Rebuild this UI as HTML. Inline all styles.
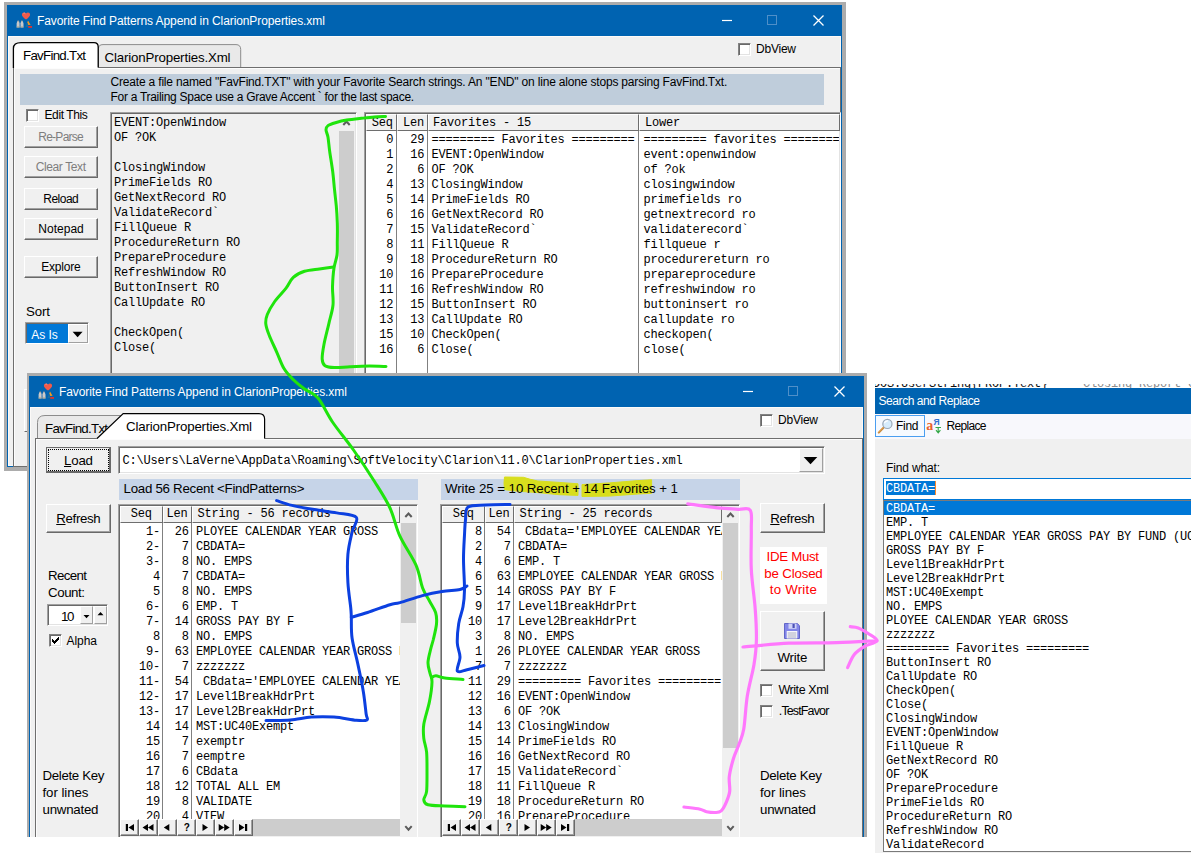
<!DOCTYPE html>
<html lang="en"><head><meta charset="utf-8"><title>Favorite Find Patterns</title>
<style>
html,body{margin:0;padding:0;background:#fff;}
body{width:1191px;height:858px;position:relative;overflow:hidden;font-family:"Liberation Sans", sans-serif;}
div,span,svg{position:absolute;box-sizing:border-box;}
.s{font-family:"Liberation Sans", sans-serif;white-space:pre;color:#000;}
.m{font-family:"Liberation Mono", monospace;white-space:pre;color:#000;line-height:16px;}
.clip{overflow:hidden;}
.btn{background:#f0f0f0;border:1px solid;border-color:#fff #696969 #696969 #fff;box-shadow:inset -1px -1px 0 #a0a0a0, inset 1px 1px 0 #f0f0f0;}
.sunk{border:1px solid;border-color:#a0a0a0 #fff #fff #a0a0a0;box-shadow:inset 1px 1px 0 #696969, inset -1px -1px 0 #e3e3e3;}
.hdr{background:#f0f0f0;border:1px solid;border-color:#fff #6e6e6e #6e6e6e #fff;}
.chk{background:#fff;border:1px solid;border-color:#828282 #fff #fff #828282;box-shadow:inset 1px 1px 0 #696969, inset -1px -1px 0 #e3e3e3;}
</style></head>
<body>
<div style="left:4px;top:2px;width:842px;height:469px;background:#acacac;"></div>
<div style="left:7px;top:5px;width:835px;height:462px;background:#0063b1;"></div>
<div style="left:8px;top:36px;width:833px;height:430px;background:#f0f0f0;border:1px solid #fcfaf8;"></div>
<svg style="left:16px;top:12px" width="17" height="17" viewBox="0 0 17 17"><path d="M10 7.600C7.200 5.500 5.900 4 5.900 2.500 5.900 0.300 8.800-.300 10 1.600 11.200-.300 14.100 0.300 14.100 2.500 14.100 4 12.800 5.500 10 7.600z" fill="#f25a4a"/><path d="M7.500 1.300q1-.600 1.800 0.300" stroke="#f9a39a" stroke-width="0.800" fill="none"/><path d="M0.600 15.600V11.500l.8-2.500h1.600l.6 2.500v4.100zM4.500 15.600V11.500l.6-2.500h1.600l.8 2.500v4.100z" fill="#c9c9c9"/><path d="M1.400 8.400h1.600v1H1.400zM5.100 8.400h1.600v1H5.100z" fill="#8f8f8f"/><path d="M3.300 11h1.500v1.600H3.300z" fill="#7f9fc0"/><path d="M0.600 14.600h3v1h-3zM4.500 14.600h3v1h-3z" fill="#a9a088"/><path d="M12 8.600l2.600 4.200-2.400.300-.9-2.600z" fill="#f59a1b"/><path d="M11.200 10.500l.9 4.500H9.500z" fill="#1f6f9f"/><path d="M12.200 14h3.800v1.800h-3.800z" fill="#e0322c"/></svg>
<span class="s" style="left:37.00px;top:13.00px;font-size:12px;line-height:16px;letter-spacing:-0.094px;color:#fff;">Favorite Find Patterns Append in ClarionProperties.xml</span>
<svg style="left:706px;top:6px" width="136" height="30" viewBox="0 0 136 30"><path d="M16 14.500h10" stroke="#fff" stroke-width="1.200" fill="none"/><rect x="61.500" y="9.500" width="9" height="9" stroke="#4f8fc8" stroke-width="1" fill="none"/><path d="M107.500 9.500l10 10M117.500 9.500l-10 10" stroke="#fff" stroke-width="1.300" fill="none"/></svg>
<div class="chk" style="left:738px;top:43px;width:13px;height:13px;"></div>
<span class="s" style="left:756.00px;top:41.00px;font-size:12px;line-height:16px;letter-spacing:-0.227px;">DbView</span>
<div style="left:13px;top:67px;width:828px;height:400px;border:1px solid #6e6e6e;background:#f0f0f0;box-shadow:inset 1px 1px 0 #fcfcfc;"></div>
<svg style="left:10px;top:40px" width="240" height="30" viewBox="0 0 240 30"><path d="M88.500 27V8.500Q88.500 4.600 93 4.600H226Q230.700 4.600 230.700 9.500V27z" fill="#e9e9e9"/><path d="M88.500 27V8.500Q88.500 4.600 93 4.600H226Q230.700 4.600 230.700 9.500V27" fill="none" stroke="#8c8c8c" stroke-width="1"/><path d="M3.400 28V8.500Q3.400 2.600 11 2.600H84Q88.200 2.600 88.200 7V28z" fill="#fff"/><path d="M3.400 28V8.500Q3.400 2.600 11 2.600H84Q88.200 2.600 88.200 7V27.500" fill="none" stroke="#000" stroke-width="1.300"/></svg>
<span class="s" style="left:23.00px;top:47.50px;font-size:13.3px;line-height:16px;letter-spacing:-0.719px;">FavFind.Txt</span>
<span class="s" style="left:104.50px;top:49.50px;font-size:13.3px;line-height:16px;letter-spacing:-0.166px;">ClarionProperties.Xml</span>
<div style="left:20px;top:74px;width:804px;height:31px;background:#bfcddb;"></div>
<span class="s" style="left:110.50px;top:74.00px;font-size:12px;line-height:16px;letter-spacing:-0.181px;">Create a file named "FavFind.TXT" with your Favorite Search strings. An "END" on line alone stops parsing FavFind.Txt.</span>
<span class="s" style="left:110.50px;top:89.00px;font-size:12px;line-height:16px;letter-spacing:-0.287px;">For a Trailing Space use a Grave Accent ` for the last space.</span>
<div class="chk" style="left:26px;top:109px;width:13px;height:13px;"></div>
<span class="s" style="left:44.50px;top:106.80px;font-size:12px;line-height:16px;letter-spacing:-0.398px;">Edit This</span>
<div class="btn" style="left:24px;top:126px;width:74px;height:22px;"></div>
<span class="s" style="left:38.25px;top:128.70px;font-size:12px;line-height:16px;letter-spacing:-0.741px;color:#7e7e7e;">Re-Parse</span>
<div class="btn" style="left:24px;top:156px;width:74px;height:22px;"></div>
<span class="s" style="left:35.75px;top:158.70px;font-size:12px;line-height:16px;letter-spacing:-0.391px;color:#7e7e7e;">Clear Text</span>
<div class="btn" style="left:24px;top:188px;width:74px;height:22px;"></div>
<span class="s" style="left:43.25px;top:190.70px;font-size:12px;line-height:16px;letter-spacing:-0.505px;color:#000;">Reload</span>
<div class="btn" style="left:24px;top:218px;width:74px;height:22px;"></div>
<span class="s" style="left:38.25px;top:220.70px;font-size:12px;line-height:16px;letter-spacing:0.022px;color:#000;">Notepad</span>
<div class="btn" style="left:24px;top:256px;width:74px;height:22px;"></div>
<span class="s" style="left:41.25px;top:258.70px;font-size:12px;line-height:16px;letter-spacing:-0.198px;color:#000;">Explore</span>
<span class="s" style="left:26.00px;top:303.70px;font-size:13.3px;line-height:16px;letter-spacing:-0.129px;">Sort</span>
<div class="sunk" style="left:25px;top:322px;width:64px;height:22px;background:#fff;"></div>
<div style="left:27px;top:324px;width:41px;height:19px;background:#0078d7;"></div>
<span class="s" style="left:31.30px;top:326.70px;font-size:12px;line-height:16px;letter-spacing:-0.043px;color:#fff;">As Is</span>
<div style="left:68px;top:324px;width:20px;height:19px;background:#f0f0f0;border:1px solid;border-color:#fff #a0a0a0 #a0a0a0 #fff;"></div>
<svg style="left:68px;top:324px" width="20" height="19" viewBox="0 0 20 19"><path d="M4.600 7.800h10l-5 5.400z" fill="#000"/></svg>
<div style="left:24px;top:389px;width:3px;height:43px;background:#f0f0f0;border-left:1px solid #fff;border-top:1px solid #fff;border-bottom:1px solid #696969;"></div>
<div class="sunk" style="left:110px;top:112px;width:247px;height:360px;background:#f0f0f0;"></div>
<span class="m" style="left:114px;top:115.0px;font-size:12px;letter-spacing:-0.200px;">EVENT:OpenWindow</span>
<span class="m" style="left:114px;top:130.0px;font-size:12px;letter-spacing:-0.200px;">OF ?OK</span>
<span class="m" style="left:114px;top:160.0px;font-size:12px;letter-spacing:-0.200px;">ClosingWindow</span>
<span class="m" style="left:114px;top:175.0px;font-size:12px;letter-spacing:-0.200px;">PrimeFields RO</span>
<span class="m" style="left:114px;top:190.0px;font-size:12px;letter-spacing:-0.200px;">GetNextRecord RO</span>
<span class="m" style="left:114px;top:205.0px;font-size:12px;letter-spacing:-0.200px;">ValidateRecord`</span>
<span class="m" style="left:114px;top:220.0px;font-size:12px;letter-spacing:-0.200px;">FillQueue R</span>
<span class="m" style="left:114px;top:235.0px;font-size:12px;letter-spacing:-0.200px;">ProcedureReturn RO</span>
<span class="m" style="left:114px;top:250.0px;font-size:12px;letter-spacing:-0.200px;">PrepareProcedure</span>
<span class="m" style="left:114px;top:265.0px;font-size:12px;letter-spacing:-0.200px;">RefreshWindow RO</span>
<span class="m" style="left:114px;top:280.0px;font-size:12px;letter-spacing:-0.200px;">ButtonInsert RO</span>
<span class="m" style="left:114px;top:295.0px;font-size:12px;letter-spacing:-0.200px;">CallUpdate RO</span>
<span class="m" style="left:114px;top:325.0px;font-size:12px;letter-spacing:-0.200px;">CheckOpen(</span>
<span class="m" style="left:114px;top:340.0px;font-size:12px;letter-spacing:-0.200px;">Close(</span>
<div style="left:338px;top:114px;width:17px;height:360px;background:#f0f0f0;"></div>
<div style="left:339px;top:131px;width:15px;height:349px;background:#cdcdcd;"></div>
<svg style="left:338px;top:114px" width="17" height="17" viewBox="0 0 17 17"><path d="M5.300 11l3.200-3.500 3.200 3.500" stroke="#5c5c5c" stroke-width="2" fill="none"/></svg>
<div class="sunk" style="left:364px;top:112px;width:477px;height:360px;background:#fff;"></div>
<div class="hdr" style="left:366px;top:114px;width:31px;height:17px;"></div>
<div class="hdr" style="left:397px;top:114px;width:31px;height:17px;"></div>
<div class="hdr" style="left:428px;top:114px;width:211px;height:17px;"></div>
<div class="hdr" style="left:639px;top:114px;width:201px;height:17px;"></div>
<span class="m" style="left:371.7px;top:114.5px;font-size:12px;letter-spacing:-0.200px;">Seq</span>
<span class="m" style="left:403px;top:114.5px;font-size:12px;letter-spacing:-0.200px;">Len</span>
<span class="m" style="left:433px;top:114.5px;font-size:12px;letter-spacing:-0.200px;">Favorites - 15</span>
<span class="m" style="left:645px;top:114.5px;font-size:12px;letter-spacing:-0.200px;">Lower</span>
<div style="left:396px;top:131px;width:1px;height:340px;background:#808080;"></div>
<div style="left:427px;top:131px;width:1px;height:340px;background:#808080;"></div>
<div style="left:638px;top:131px;width:1px;height:340px;background:#808080;"></div>
<div class="clip" style="left:639px;top:131px;width:200px;height:340px;">
<span class="m" style="left:4.5px;top:1.00px;font-size:12px;letter-spacing:-0.200px;">========= favorites =========</span>
<span class="m" style="left:4.5px;top:16.00px;font-size:12px;letter-spacing:-0.200px;">event:openwindow</span>
<span class="m" style="left:4.5px;top:31.00px;font-size:12px;letter-spacing:-0.200px;">of ?ok</span>
<span class="m" style="left:4.5px;top:46.00px;font-size:12px;letter-spacing:-0.200px;">closingwindow</span>
<span class="m" style="left:4.5px;top:61.00px;font-size:12px;letter-spacing:-0.200px;">primefields ro</span>
<span class="m" style="left:4.5px;top:76.00px;font-size:12px;letter-spacing:-0.200px;">getnextrecord ro</span>
<span class="m" style="left:4.5px;top:91.00px;font-size:12px;letter-spacing:-0.200px;">validaterecord`</span>
<span class="m" style="left:4.5px;top:106.00px;font-size:12px;letter-spacing:-0.200px;">fillqueue r</span>
<span class="m" style="left:4.5px;top:121.00px;font-size:12px;letter-spacing:-0.200px;">procedurereturn ro</span>
<span class="m" style="left:4.5px;top:136.00px;font-size:12px;letter-spacing:-0.200px;">prepareprocedure</span>
<span class="m" style="left:4.5px;top:151.00px;font-size:12px;letter-spacing:-0.200px;">refreshwindow ro</span>
<span class="m" style="left:4.5px;top:166.00px;font-size:12px;letter-spacing:-0.200px;">buttoninsert ro</span>
<span class="m" style="left:4.5px;top:181.00px;font-size:12px;letter-spacing:-0.200px;">callupdate ro</span>
<span class="m" style="left:4.5px;top:196.00px;font-size:12px;letter-spacing:-0.200px;">checkopen(</span>
<span class="m" style="left:4.5px;top:211.00px;font-size:12px;letter-spacing:-0.200px;">close(</span>
</div>
<span class="m" style="right:797.80px;top:132.0px;font-size:12px;letter-spacing:-0.200px;">0</span>
<span class="m" style="right:766.80px;top:132.0px;font-size:12px;letter-spacing:-0.200px;">29</span>
<span class="m" style="left:431.5px;top:132.0px;font-size:12px;letter-spacing:-0.200px;">========= Favorites =========</span>
<span class="m" style="right:797.80px;top:147.0px;font-size:12px;letter-spacing:-0.200px;">1</span>
<span class="m" style="right:766.80px;top:147.0px;font-size:12px;letter-spacing:-0.200px;">16</span>
<span class="m" style="left:431.5px;top:147.0px;font-size:12px;letter-spacing:-0.200px;">EVENT:OpenWindow</span>
<span class="m" style="right:797.80px;top:162.0px;font-size:12px;letter-spacing:-0.200px;">2</span>
<span class="m" style="right:766.80px;top:162.0px;font-size:12px;letter-spacing:-0.200px;">6</span>
<span class="m" style="left:431.5px;top:162.0px;font-size:12px;letter-spacing:-0.200px;">OF ?OK</span>
<span class="m" style="right:797.80px;top:177.0px;font-size:12px;letter-spacing:-0.200px;">4</span>
<span class="m" style="right:766.80px;top:177.0px;font-size:12px;letter-spacing:-0.200px;">13</span>
<span class="m" style="left:431.5px;top:177.0px;font-size:12px;letter-spacing:-0.200px;">ClosingWindow</span>
<span class="m" style="right:797.80px;top:192.0px;font-size:12px;letter-spacing:-0.200px;">5</span>
<span class="m" style="right:766.80px;top:192.0px;font-size:12px;letter-spacing:-0.200px;">14</span>
<span class="m" style="left:431.5px;top:192.0px;font-size:12px;letter-spacing:-0.200px;">PrimeFields RO</span>
<span class="m" style="right:797.80px;top:207.0px;font-size:12px;letter-spacing:-0.200px;">6</span>
<span class="m" style="right:766.80px;top:207.0px;font-size:12px;letter-spacing:-0.200px;">16</span>
<span class="m" style="left:431.5px;top:207.0px;font-size:12px;letter-spacing:-0.200px;">GetNextRecord RO</span>
<span class="m" style="right:797.80px;top:222.0px;font-size:12px;letter-spacing:-0.200px;">7</span>
<span class="m" style="right:766.80px;top:222.0px;font-size:12px;letter-spacing:-0.200px;">15</span>
<span class="m" style="left:431.5px;top:222.0px;font-size:12px;letter-spacing:-0.200px;">ValidateRecord`</span>
<span class="m" style="right:797.80px;top:237.0px;font-size:12px;letter-spacing:-0.200px;">8</span>
<span class="m" style="right:766.80px;top:237.0px;font-size:12px;letter-spacing:-0.200px;">11</span>
<span class="m" style="left:431.5px;top:237.0px;font-size:12px;letter-spacing:-0.200px;">FillQueue R</span>
<span class="m" style="right:797.80px;top:252.0px;font-size:12px;letter-spacing:-0.200px;">9</span>
<span class="m" style="right:766.80px;top:252.0px;font-size:12px;letter-spacing:-0.200px;">18</span>
<span class="m" style="left:431.5px;top:252.0px;font-size:12px;letter-spacing:-0.200px;">ProcedureReturn RO</span>
<span class="m" style="right:797.80px;top:267.0px;font-size:12px;letter-spacing:-0.200px;">10</span>
<span class="m" style="right:766.80px;top:267.0px;font-size:12px;letter-spacing:-0.200px;">16</span>
<span class="m" style="left:431.5px;top:267.0px;font-size:12px;letter-spacing:-0.200px;">PrepareProcedure</span>
<span class="m" style="right:797.80px;top:282.0px;font-size:12px;letter-spacing:-0.200px;">11</span>
<span class="m" style="right:766.80px;top:282.0px;font-size:12px;letter-spacing:-0.200px;">16</span>
<span class="m" style="left:431.5px;top:282.0px;font-size:12px;letter-spacing:-0.200px;">RefreshWindow RO</span>
<span class="m" style="right:797.80px;top:297.0px;font-size:12px;letter-spacing:-0.200px;">12</span>
<span class="m" style="right:766.80px;top:297.0px;font-size:12px;letter-spacing:-0.200px;">15</span>
<span class="m" style="left:431.5px;top:297.0px;font-size:12px;letter-spacing:-0.200px;">ButtonInsert RO</span>
<span class="m" style="right:797.80px;top:312.0px;font-size:12px;letter-spacing:-0.200px;">13</span>
<span class="m" style="right:766.80px;top:312.0px;font-size:12px;letter-spacing:-0.200px;">13</span>
<span class="m" style="left:431.5px;top:312.0px;font-size:12px;letter-spacing:-0.200px;">CallUpdate RO</span>
<span class="m" style="right:797.80px;top:327.0px;font-size:12px;letter-spacing:-0.200px;">15</span>
<span class="m" style="right:766.80px;top:327.0px;font-size:12px;letter-spacing:-0.200px;">10</span>
<span class="m" style="left:431.5px;top:327.0px;font-size:12px;letter-spacing:-0.200px;">CheckOpen(</span>
<span class="m" style="right:797.80px;top:342.0px;font-size:12px;letter-spacing:-0.200px;">16</span>
<span class="m" style="right:766.80px;top:342.0px;font-size:12px;letter-spacing:-0.200px;">6</span>
<span class="m" style="left:431.5px;top:342.0px;font-size:12px;letter-spacing:-0.200px;">Close(</span>
<div style="left:27px;top:373px;width:840px;height:464px;background:#acacac;"></div>
<div style="left:29px;top:376px;width:835px;height:461px;background:#0063b1;"></div>
<div style="left:30px;top:407px;width:833px;height:430px;background:#f0f0f0;border:1px solid #fcfaf8;border-bottom:none;"></div>
<svg style="left:38px;top:383px" width="17" height="17" viewBox="0 0 17 17"><path d="M10 7.600C7.200 5.500 5.900 4 5.900 2.500 5.900 0.300 8.800-.300 10 1.600 11.200-.300 14.100 0.300 14.100 2.500 14.100 4 12.800 5.500 10 7.600z" fill="#f25a4a"/><path d="M7.500 1.300q1-.600 1.800 0.300" stroke="#f9a39a" stroke-width="0.800" fill="none"/><path d="M0.600 15.600V11.500l.8-2.500h1.600l.6 2.500v4.100zM4.500 15.600V11.500l.6-2.500h1.600l.8 2.500v4.100z" fill="#c9c9c9"/><path d="M1.400 8.400h1.600v1H1.400zM5.100 8.400h1.600v1H5.100z" fill="#8f8f8f"/><path d="M3.300 11h1.500v1.600H3.300z" fill="#7f9fc0"/><path d="M0.600 14.600h3v1h-3zM4.500 14.600h3v1h-3z" fill="#a9a088"/><path d="M12 8.600l2.600 4.200-2.400.300-.9-2.600z" fill="#f59a1b"/><path d="M11.200 10.500l.9 4.500H9.500z" fill="#1f6f9f"/><path d="M12.200 14h3.800v1.800h-3.800z" fill="#e0322c"/></svg>
<span class="s" style="left:59.00px;top:384.00px;font-size:12px;line-height:16px;letter-spacing:-0.094px;color:#fff;">Favorite Find Patterns Append in ClarionProperties.xml</span>
<svg style="left:727px;top:377px" width="136" height="30" viewBox="0 0 136 30"><path d="M16 14.500h10" stroke="#fff" stroke-width="1.200" fill="none"/><rect x="61.500" y="9.500" width="9" height="9" stroke="#4f8fc8" stroke-width="1" fill="none"/><path d="M107.500 9.500l10 10M117.500 9.500l-10 10" stroke="#fff" stroke-width="1.300" fill="none"/></svg>
<div class="chk" style="left:760px;top:414px;width:13px;height:13px;"></div>
<span class="s" style="left:778.00px;top:412.00px;font-size:12px;line-height:16px;letter-spacing:-0.227px;">DbView</span>
<div style="left:35px;top:438px;width:828px;height:402px;border:1px solid #6e6e6e;background:#f0f0f0;box-shadow:inset 1px 1px 0 #fcfcfc;"></div>
<svg style="left:30px;top:410px" width="250" height="32" viewBox="0 0 250 32"><path d="M7.500 28V12.500Q7.500 5.500 15 5.500H92V28z" fill="#e9e9e9"/><path d="M7.500 28V12.500Q7.500 5.500 15 5.500H91" fill="none" stroke="#8c8c8c" stroke-width="1"/></svg>
<span class="s" style="left:45.00px;top:420.50px;font-size:13.3px;line-height:16px;letter-spacing:-0.719px;">FavFind.Txt</span>
<svg style="left:30px;top:410px" width="250" height="32" viewBox="0 0 250 32"><path d="M66.500 29L93.200 3.600H229Q234.600 3.600 234.600 9V29z" fill="#fff"/><path d="M67 28.500L93.200 3.600H229Q234.600 3.600 234.600 9V28.500" fill="none" stroke="#000" stroke-width="1.200"/></svg>
<span class="s" style="left:126.00px;top:418.50px;font-size:13.3px;line-height:16px;letter-spacing:-0.166px;">ClarionProperties.Xml</span>
<div style="left:46px;top:447px;width:65px;height:26px;background:#f0f0f0;border:1px solid #6a6a6a;box-shadow:inset -1px -1px 0 #6a6a6a;"></div>
<span class="s" style="left:64.00px;top:453.00px;font-size:13.3px;line-height:16px;letter-spacing:-0.193px;"><u>L</u>oad</span>
<div style="left:48px;top:449px;width:61px;height:22px;border:1px dotted #000;"></div>
<div class="sunk" style="left:118px;top:446px;width:707px;height:28px;background:#fff;"></div>
<span class="m" style="left:122.5px;top:452.5px;font-size:12px;letter-spacing:-0.200px;">C:\Users\LaVerne\AppData\Roaming\SoftVelocity\Clarion\11.0\ClarionProperties.xml</span>
<div style="left:799px;top:448px;width:24px;height:24px;background:#f0f0f0;border:1px solid;border-color:#fff #a0a0a0 #a0a0a0 #fff;"></div>
<svg style="left:799px;top:448px" width="24" height="24" viewBox="0 0 24 24"><path d="M4.700 9h13.600l-6.800 7.300z" fill="#000"/></svg>
<div style="left:119px;top:479px;width:299px;height:21px;background:#c6d4e8;"></div>
<span class="s" style="left:123.50px;top:481.00px;font-size:13.3px;line-height:16px;letter-spacing:-0.268px;">Load 56 Recent &lt;FindPatterns&gt;</span>
<div style="left:441px;top:479px;width:299px;height:21px;background:#c6d4e8;"></div>
<svg style="left:500px;top:474px" width="160" height="28" viewBox="0 0 160 28"><path d="M4.500 3L23.500 3.300Q30 5.500 37.800 7L59.200 8.400 78 9.800V21.400L59.200 20.700 37.800 18.600 16.400 17.100 4.500 15.700Q3.500 9 4.500 3z" fill="#d8de1e" stroke="#d8de1e" stroke-width="1" stroke-linejoin="round"/><path d="M82 10.600L109.300 8.900 137.900 6.600 151.600 5.800V19.300L137.900 20 109.300 22.100 82 22.500z" fill="#d8de1e" stroke="#d8de1e" stroke-width="1" stroke-linejoin="round"/></svg>
<span class="s" style="left:445.00px;top:480.80px;font-size:13.3px;line-height:16px;letter-spacing:-0.076px;">Write 25 = 10 Recent + 14 Favorites + 1</span>
<div class="btn" style="left:46px;top:504px;width:65px;height:29px;"></div>
<span class="s" style="left:56.25px;top:511.10px;font-size:13.3px;line-height:16px;letter-spacing:-0.343px;color:#000;text-decoration:none;"><u>R</u>efresh</span>
<span class="s" style="left:48.00px;top:567.70px;font-size:13.3px;line-height:16px;letter-spacing:-0.626px;">Recent</span>
<span class="s" style="left:48.00px;top:585.00px;font-size:13.3px;line-height:16px;letter-spacing:-0.435px;">Count:</span>
<div class="sunk" style="left:47px;top:604px;width:61px;height:22px;background:#fff;"></div>
<span class="s" style="left:61.00px;top:609.00px;font-size:13.3px;line-height:16px;letter-spacing:-1.290px;">10</span>
<div style="left:80px;top:606px;width:13px;height:18px;background:#f0f0f0;border:1px solid;border-color:#fff #a0a0a0 #a0a0a0 #fff;"></div>
<div style="left:94px;top:606px;width:13px;height:18px;background:#f0f0f0;border:1px solid;border-color:#fff #a0a0a0 #a0a0a0 #fff;"></div>
<svg style="left:80px;top:606px" width="27" height="18" viewBox="0 0 27 18"><path d="M3.500 9h6l-3 3.200zM17.500 9.200h6l-3-3.200z" fill="#000"/></svg>
<div class="chk" style="left:49px;top:634px;width:13px;height:13px;"></div>
<svg style="left:52px;top:637px" width="7" height="7" viewBox="0 0 7 7" shape-rendering="crispEdges" fill="#000"><rect x="0" y="2" width="1" height="3"/><rect x="1" y="3" width="1" height="3"/><rect x="2" y="4" width="1" height="3"/><rect x="3" y="3" width="1" height="3"/><rect x="4" y="2" width="1" height="3"/><rect x="5" y="1" width="1" height="3"/><rect x="6" y="0" width="1" height="3"/></svg>
<span class="s" style="left:66.50px;top:632.50px;font-size:12px;line-height:16px;letter-spacing:-0.048px;">Alpha</span>
<span class="s" style="left:42.50px;top:767.50px;font-size:13.3px;line-height:16px;letter-spacing:-0.338px;">Delete Key</span>
<span class="s" style="left:42.50px;top:784.50px;font-size:13.3px;line-height:16px;letter-spacing:-0.070px;">for lines</span>
<span class="s" style="left:42.50px;top:801.50px;font-size:13.3px;line-height:16px;letter-spacing:-0.238px;">unwnated</span>
<div class="sunk" style="left:118px;top:504px;width:300px;height:340px;background:#fff;"></div>
<div class="hdr" style="left:120px;top:506px;width:43px;height:17px;"></div>
<div class="hdr" style="left:163px;top:506px;width:29px;height:17px;"></div>
<div class="hdr" style="left:192px;top:506px;width:208px;height:17px;"></div>
<span class="m" style="left:130.7px;top:506.20000000000005px;font-size:12px;letter-spacing:-0.200px;">Seq</span>
<span class="m" style="left:166.4px;top:506.20000000000005px;font-size:12px;letter-spacing:-0.200px;">Len</span>
<span class="m" style="left:197.6px;top:506.20000000000005px;font-size:12px;letter-spacing:-0.200px;">String - 56 records</span>
<div style="left:162px;top:523px;width:1px;height:296px;background:#808080;"></div>
<div style="left:191px;top:523px;width:1px;height:296px;background:#808080;"></div>
<div class="clip" style="left:192px;top:523px;width:208px;height:296px;">
<span class="m" style="left:4px;top:0.50px;font-size:12px;letter-spacing:-0.200px;">PLOYEE CALENDAR YEAR GROSS</span>
<span class="m" style="left:4px;top:15.50px;font-size:12px;letter-spacing:-0.200px;">CBDATA=</span>
<span class="m" style="left:4px;top:30.50px;font-size:12px;letter-spacing:-0.200px;">NO. EMPS</span>
<span class="m" style="left:4px;top:45.50px;font-size:12px;letter-spacing:-0.200px;">CBDATA=</span>
<span class="m" style="left:4px;top:60.50px;font-size:12px;letter-spacing:-0.200px;">NO. EMPS</span>
<span class="m" style="left:4px;top:75.50px;font-size:12px;letter-spacing:-0.200px;">EMP. T</span>
<span class="m" style="left:4px;top:90.50px;font-size:12px;letter-spacing:-0.200px;">GROSS PAY BY F</span>
<span class="m" style="left:4px;top:105.50px;font-size:12px;letter-spacing:-0.200px;">NO. EMPS</span>
<span class="m" style="left:4px;top:120.50px;font-size:12px;letter-spacing:-0.200px;">EMPLOYEE CALENDAR YEAR GROSS PAY BY FUND (UC</span>
<span class="m" style="left:4px;top:135.50px;font-size:12px;letter-spacing:-0.200px;">zzzzzzz</span>
<span class="m" style="left:4px;top:150.50px;font-size:12px;letter-spacing:-0.200px;"> CBdata='EMPLOYEE CALENDAR YEAR GROSS</span>
<span class="m" style="left:4px;top:165.50px;font-size:12px;letter-spacing:-0.200px;">Level1BreakHdrPrt</span>
<span class="m" style="left:4px;top:180.50px;font-size:12px;letter-spacing:-0.200px;">Level2BreakHdrPrt</span>
<span class="m" style="left:4px;top:195.50px;font-size:12px;letter-spacing:-0.200px;">MST:UC40Exempt</span>
<span class="m" style="left:4px;top:210.50px;font-size:12px;letter-spacing:-0.200px;">exemptr</span>
<span class="m" style="left:4px;top:225.50px;font-size:12px;letter-spacing:-0.200px;">eemptre</span>
<span class="m" style="left:4px;top:240.50px;font-size:12px;letter-spacing:-0.200px;">CBdata</span>
<span class="m" style="left:4px;top:255.50px;font-size:12px;letter-spacing:-0.200px;">TOTAL ALL EM</span>
<span class="m" style="left:4px;top:270.50px;font-size:12px;letter-spacing:-0.200px;">VALIDATE</span>
<span class="m" style="left:4px;top:285.50px;font-size:12px;letter-spacing:-0.200px;">VIEW</span>
</div>
<div class="clip" style="left:120px;top:523px;width:71px;height:296px;">
<span class="m" style="right:31.00px;top:0.50px;font-size:12px;letter-spacing:-0.200px;">1-</span>
<span class="m" style="right:2.30px;top:0.50px;font-size:12px;letter-spacing:-0.200px;">26</span>
<span class="m" style="right:31.00px;top:15.50px;font-size:12px;letter-spacing:-0.200px;">2-</span>
<span class="m" style="right:2.30px;top:15.50px;font-size:12px;letter-spacing:-0.200px;">7</span>
<span class="m" style="right:31.00px;top:30.50px;font-size:12px;letter-spacing:-0.200px;">3-</span>
<span class="m" style="right:2.30px;top:30.50px;font-size:12px;letter-spacing:-0.200px;">8</span>
<span class="m" style="right:31.00px;top:45.50px;font-size:12px;letter-spacing:-0.200px;">4</span>
<span class="m" style="right:2.30px;top:45.50px;font-size:12px;letter-spacing:-0.200px;">7</span>
<span class="m" style="right:31.00px;top:60.50px;font-size:12px;letter-spacing:-0.200px;">5</span>
<span class="m" style="right:2.30px;top:60.50px;font-size:12px;letter-spacing:-0.200px;">8</span>
<span class="m" style="right:31.00px;top:75.50px;font-size:12px;letter-spacing:-0.200px;">6-</span>
<span class="m" style="right:2.30px;top:75.50px;font-size:12px;letter-spacing:-0.200px;">6</span>
<span class="m" style="right:31.00px;top:90.50px;font-size:12px;letter-spacing:-0.200px;">7-</span>
<span class="m" style="right:2.30px;top:90.50px;font-size:12px;letter-spacing:-0.200px;">14</span>
<span class="m" style="right:31.00px;top:105.50px;font-size:12px;letter-spacing:-0.200px;">8</span>
<span class="m" style="right:2.30px;top:105.50px;font-size:12px;letter-spacing:-0.200px;">8</span>
<span class="m" style="right:31.00px;top:120.50px;font-size:12px;letter-spacing:-0.200px;">9-</span>
<span class="m" style="right:2.30px;top:120.50px;font-size:12px;letter-spacing:-0.200px;">63</span>
<span class="m" style="right:31.00px;top:135.50px;font-size:12px;letter-spacing:-0.200px;">10-</span>
<span class="m" style="right:2.30px;top:135.50px;font-size:12px;letter-spacing:-0.200px;">7</span>
<span class="m" style="right:31.00px;top:150.50px;font-size:12px;letter-spacing:-0.200px;">11-</span>
<span class="m" style="right:2.30px;top:150.50px;font-size:12px;letter-spacing:-0.200px;">54</span>
<span class="m" style="right:31.00px;top:165.50px;font-size:12px;letter-spacing:-0.200px;">12-</span>
<span class="m" style="right:2.30px;top:165.50px;font-size:12px;letter-spacing:-0.200px;">17</span>
<span class="m" style="right:31.00px;top:180.50px;font-size:12px;letter-spacing:-0.200px;">13-</span>
<span class="m" style="right:2.30px;top:180.50px;font-size:12px;letter-spacing:-0.200px;">17</span>
<span class="m" style="right:31.00px;top:195.50px;font-size:12px;letter-spacing:-0.200px;">14</span>
<span class="m" style="right:2.30px;top:195.50px;font-size:12px;letter-spacing:-0.200px;">14</span>
<span class="m" style="right:31.00px;top:210.50px;font-size:12px;letter-spacing:-0.200px;">15</span>
<span class="m" style="right:2.30px;top:210.50px;font-size:12px;letter-spacing:-0.200px;">7</span>
<span class="m" style="right:31.00px;top:225.50px;font-size:12px;letter-spacing:-0.200px;">16</span>
<span class="m" style="right:2.30px;top:225.50px;font-size:12px;letter-spacing:-0.200px;">7</span>
<span class="m" style="right:31.00px;top:240.50px;font-size:12px;letter-spacing:-0.200px;">17</span>
<span class="m" style="right:2.30px;top:240.50px;font-size:12px;letter-spacing:-0.200px;">6</span>
<span class="m" style="right:31.00px;top:255.50px;font-size:12px;letter-spacing:-0.200px;">18</span>
<span class="m" style="right:2.30px;top:255.50px;font-size:12px;letter-spacing:-0.200px;">12</span>
<span class="m" style="right:31.00px;top:270.50px;font-size:12px;letter-spacing:-0.200px;">19</span>
<span class="m" style="right:2.30px;top:270.50px;font-size:12px;letter-spacing:-0.200px;">8</span>
<span class="m" style="right:31.00px;top:285.50px;font-size:12px;letter-spacing:-0.200px;">20</span>
<span class="m" style="right:2.30px;top:285.50px;font-size:12px;letter-spacing:-0.200px;">4</span>
</div>
<div style="left:400px;top:506px;width:17px;height:314px;background:#f0f0f0;"></div>
<div style="left:401px;top:523px;width:15px;height:100px;background:#cdcdcd;"></div>
<svg style="left:400px;top:506px" width="17" height="17" viewBox="0 0 17 17"><path d="M5.300 11l3.200-3.500 3.200 3.500" stroke="#5c5c5c" stroke-width="2" fill="none"/></svg>
<div style="left:120px;top:819px;width:297px;height:18px;background:#f0f0f0;"></div>
<div class="btn" style="left:120px;top:819px;width:19px;height:17px;"></div>
<svg style="left:120px;top:819px" width="19" height="16" viewBox="0 0 19 16"><path d="M5.800 5h2.200v7H5.800zM14 5L8.500 8.500l5.500 3.500z" fill="#000"/></svg>
<div class="btn" style="left:139px;top:819px;width:19px;height:17px;"></div>
<svg style="left:139px;top:819px" width="19" height="16" viewBox="0 0 19 16"><path d="M9 5L3.500 8.500 9 12zM14.500 5L9 8.500l5.500 3.500z" fill="#000"/></svg>
<div class="btn" style="left:158px;top:819px;width:19px;height:17px;"></div>
<svg style="left:158px;top:819px" width="19" height="16" viewBox="0 0 19 16"><path d="M11.300 5L5.800 8.500l5.500 3.500z" fill="#000"/></svg>
<div class="btn" style="left:177px;top:819px;width:19px;height:17px;"></div>
<span class="s" style="left:183.72px;top:819.80px;font-size:10px;line-height:16px;letter-spacing:0.000px;font-weight:bold;">?</span>
<div class="btn" style="left:196px;top:819px;width:19px;height:17px;"></div>
<svg style="left:196px;top:819px" width="19" height="16" viewBox="0 0 19 16"><path d="M6.500 5L12 8.500 6.500 12z" fill="#000"/></svg>
<div class="btn" style="left:215px;top:819px;width:19px;height:17px;"></div>
<svg style="left:215px;top:819px" width="19" height="16" viewBox="0 0 19 16"><path d="M3.700 5l5.500 3.500L3.700 12zM9.200 5l5.500 3.500L9.200 12z" fill="#000"/></svg>
<div class="btn" style="left:234px;top:819px;width:19px;height:17px;"></div>
<svg style="left:234px;top:819px" width="19" height="16" viewBox="0 0 19 16"><path d="M5 5l5.500 3.500L5 12zM11 5h2.200v7h-2.200z" fill="#000"/></svg>
<div style="left:253px;top:819px;width:147px;height:17px;background:#cdcdcd;"></div>
<svg style="left:400px;top:819px" width="17" height="17" viewBox="0 0 17 17"><path d="M5.300 7.200l3.200 3.500 3.200-3.500" stroke="#5c5c5c" stroke-width="2" fill="none"/></svg>
<div class="sunk" style="left:440px;top:504px;width:300px;height:340px;background:#fff;"></div>
<div class="hdr" style="left:442px;top:506px;width:43px;height:17px;"></div>
<div class="hdr" style="left:485px;top:506px;width:29px;height:17px;"></div>
<div class="hdr" style="left:514px;top:506px;width:208px;height:17px;"></div>
<span class="m" style="left:452.7px;top:506.20000000000005px;font-size:12px;letter-spacing:-0.200px;">Seq</span>
<span class="m" style="left:488.4px;top:506.20000000000005px;font-size:12px;letter-spacing:-0.200px;">Len</span>
<span class="m" style="left:519.6px;top:506.20000000000005px;font-size:12px;letter-spacing:-0.200px;">String - 25 records</span>
<div style="left:484px;top:523px;width:1px;height:296px;background:#808080;"></div>
<div style="left:513px;top:523px;width:1px;height:296px;background:#808080;"></div>
<div class="clip" style="left:514px;top:523px;width:208px;height:296px;">
<span class="m" style="left:4px;top:0.50px;font-size:12px;letter-spacing:-0.200px;"> CBdata='EMPLOYEE CALENDAR YEAR GROSS</span>
<span class="m" style="left:4px;top:15.50px;font-size:12px;letter-spacing:-0.200px;">CBDATA=</span>
<span class="m" style="left:4px;top:30.50px;font-size:12px;letter-spacing:-0.200px;">EMP. T</span>
<span class="m" style="left:4px;top:45.50px;font-size:12px;letter-spacing:-0.200px;">EMPLOYEE CALENDAR YEAR GROSS PAY BY FUND (UC</span>
<span class="m" style="left:4px;top:60.50px;font-size:12px;letter-spacing:-0.200px;">GROSS PAY BY F</span>
<span class="m" style="left:4px;top:75.50px;font-size:12px;letter-spacing:-0.200px;">Level1BreakHdrPrt</span>
<span class="m" style="left:4px;top:90.50px;font-size:12px;letter-spacing:-0.200px;">Level2BreakHdrPrt</span>
<span class="m" style="left:4px;top:105.50px;font-size:12px;letter-spacing:-0.200px;">NO. EMPS</span>
<span class="m" style="left:4px;top:120.50px;font-size:12px;letter-spacing:-0.200px;">PLOYEE CALENDAR YEAR GROSS</span>
<span class="m" style="left:4px;top:135.50px;font-size:12px;letter-spacing:-0.200px;">zzzzzzz</span>
<span class="m" style="left:4px;top:150.50px;font-size:12px;letter-spacing:-0.200px;">========= Favorites =========</span>
<span class="m" style="left:4px;top:165.50px;font-size:12px;letter-spacing:-0.200px;">EVENT:OpenWindow</span>
<span class="m" style="left:4px;top:180.50px;font-size:12px;letter-spacing:-0.200px;">OF ?OK</span>
<span class="m" style="left:4px;top:195.50px;font-size:12px;letter-spacing:-0.200px;">ClosingWindow</span>
<span class="m" style="left:4px;top:210.50px;font-size:12px;letter-spacing:-0.200px;">PrimeFields RO</span>
<span class="m" style="left:4px;top:225.50px;font-size:12px;letter-spacing:-0.200px;">GetNextRecord RO</span>
<span class="m" style="left:4px;top:240.50px;font-size:12px;letter-spacing:-0.200px;">ValidateRecord`</span>
<span class="m" style="left:4px;top:255.50px;font-size:12px;letter-spacing:-0.200px;">FillQueue R</span>
<span class="m" style="left:4px;top:270.50px;font-size:12px;letter-spacing:-0.200px;">ProcedureReturn RO</span>
<span class="m" style="left:4px;top:285.50px;font-size:12px;letter-spacing:-0.200px;">PrepareProcedure</span>
</div>
<div class="clip" style="left:442px;top:523px;width:71px;height:296px;">
<span class="m" style="right:31.00px;top:0.50px;font-size:12px;letter-spacing:-0.200px;">8</span>
<span class="m" style="right:2.30px;top:0.50px;font-size:12px;letter-spacing:-0.200px;">54</span>
<span class="m" style="right:31.00px;top:15.50px;font-size:12px;letter-spacing:-0.200px;">2</span>
<span class="m" style="right:2.30px;top:15.50px;font-size:12px;letter-spacing:-0.200px;">7</span>
<span class="m" style="right:31.00px;top:30.50px;font-size:12px;letter-spacing:-0.200px;">4</span>
<span class="m" style="right:2.30px;top:30.50px;font-size:12px;letter-spacing:-0.200px;">6</span>
<span class="m" style="right:31.00px;top:45.50px;font-size:12px;letter-spacing:-0.200px;">6</span>
<span class="m" style="right:2.30px;top:45.50px;font-size:12px;letter-spacing:-0.200px;">63</span>
<span class="m" style="right:31.00px;top:60.50px;font-size:12px;letter-spacing:-0.200px;">5</span>
<span class="m" style="right:2.30px;top:60.50px;font-size:12px;letter-spacing:-0.200px;">14</span>
<span class="m" style="right:31.00px;top:75.50px;font-size:12px;letter-spacing:-0.200px;">9</span>
<span class="m" style="right:2.30px;top:75.50px;font-size:12px;letter-spacing:-0.200px;">17</span>
<span class="m" style="right:31.00px;top:90.50px;font-size:12px;letter-spacing:-0.200px;">10</span>
<span class="m" style="right:2.30px;top:90.50px;font-size:12px;letter-spacing:-0.200px;">17</span>
<span class="m" style="right:31.00px;top:105.50px;font-size:12px;letter-spacing:-0.200px;">3</span>
<span class="m" style="right:2.30px;top:105.50px;font-size:12px;letter-spacing:-0.200px;">8</span>
<span class="m" style="right:31.00px;top:120.50px;font-size:12px;letter-spacing:-0.200px;">1</span>
<span class="m" style="right:2.30px;top:120.50px;font-size:12px;letter-spacing:-0.200px;">26</span>
<span class="m" style="right:31.00px;top:135.50px;font-size:12px;letter-spacing:-0.200px;">7</span>
<span class="m" style="right:2.30px;top:135.50px;font-size:12px;letter-spacing:-0.200px;">7</span>
<span class="m" style="right:31.00px;top:150.50px;font-size:12px;letter-spacing:-0.200px;">11</span>
<span class="m" style="right:2.30px;top:150.50px;font-size:12px;letter-spacing:-0.200px;">29</span>
<span class="m" style="right:31.00px;top:165.50px;font-size:12px;letter-spacing:-0.200px;">12</span>
<span class="m" style="right:2.30px;top:165.50px;font-size:12px;letter-spacing:-0.200px;">16</span>
<span class="m" style="right:31.00px;top:180.50px;font-size:12px;letter-spacing:-0.200px;">13</span>
<span class="m" style="right:2.30px;top:180.50px;font-size:12px;letter-spacing:-0.200px;">6</span>
<span class="m" style="right:31.00px;top:195.50px;font-size:12px;letter-spacing:-0.200px;">14</span>
<span class="m" style="right:2.30px;top:195.50px;font-size:12px;letter-spacing:-0.200px;">13</span>
<span class="m" style="right:31.00px;top:210.50px;font-size:12px;letter-spacing:-0.200px;">15</span>
<span class="m" style="right:2.30px;top:210.50px;font-size:12px;letter-spacing:-0.200px;">14</span>
<span class="m" style="right:31.00px;top:225.50px;font-size:12px;letter-spacing:-0.200px;">16</span>
<span class="m" style="right:2.30px;top:225.50px;font-size:12px;letter-spacing:-0.200px;">16</span>
<span class="m" style="right:31.00px;top:240.50px;font-size:12px;letter-spacing:-0.200px;">17</span>
<span class="m" style="right:2.30px;top:240.50px;font-size:12px;letter-spacing:-0.200px;">15</span>
<span class="m" style="right:31.00px;top:255.50px;font-size:12px;letter-spacing:-0.200px;">18</span>
<span class="m" style="right:2.30px;top:255.50px;font-size:12px;letter-spacing:-0.200px;">11</span>
<span class="m" style="right:31.00px;top:270.50px;font-size:12px;letter-spacing:-0.200px;">19</span>
<span class="m" style="right:2.30px;top:270.50px;font-size:12px;letter-spacing:-0.200px;">18</span>
<span class="m" style="right:31.00px;top:285.50px;font-size:12px;letter-spacing:-0.200px;">20</span>
<span class="m" style="right:2.30px;top:285.50px;font-size:12px;letter-spacing:-0.200px;">16</span>
</div>
<div style="left:722px;top:506px;width:17px;height:314px;background:#f0f0f0;"></div>
<div style="left:723px;top:523px;width:15px;height:225px;background:#cdcdcd;"></div>
<svg style="left:722px;top:506px" width="17" height="17" viewBox="0 0 17 17"><path d="M5.300 11l3.200-3.500 3.200 3.500" stroke="#5c5c5c" stroke-width="2" fill="none"/></svg>
<div style="left:442px;top:819px;width:297px;height:18px;background:#f0f0f0;"></div>
<div class="btn" style="left:442px;top:819px;width:19px;height:17px;"></div>
<svg style="left:442px;top:819px" width="19" height="16" viewBox="0 0 19 16"><path d="M5.800 5h2.200v7H5.800zM14 5L8.500 8.500l5.500 3.500z" fill="#000"/></svg>
<div class="btn" style="left:461px;top:819px;width:19px;height:17px;"></div>
<svg style="left:461px;top:819px" width="19" height="16" viewBox="0 0 19 16"><path d="M9 5L3.500 8.500 9 12zM14.500 5L9 8.500l5.500 3.500z" fill="#000"/></svg>
<div class="btn" style="left:480px;top:819px;width:19px;height:17px;"></div>
<svg style="left:480px;top:819px" width="19" height="16" viewBox="0 0 19 16"><path d="M11.300 5L5.800 8.500l5.500 3.500z" fill="#000"/></svg>
<div class="btn" style="left:499px;top:819px;width:19px;height:17px;"></div>
<span class="s" style="left:505.72px;top:819.80px;font-size:10px;line-height:16px;letter-spacing:0.000px;font-weight:bold;">?</span>
<div class="btn" style="left:518px;top:819px;width:19px;height:17px;"></div>
<svg style="left:518px;top:819px" width="19" height="16" viewBox="0 0 19 16"><path d="M6.500 5L12 8.500 6.500 12z" fill="#000"/></svg>
<div class="btn" style="left:537px;top:819px;width:19px;height:17px;"></div>
<svg style="left:537px;top:819px" width="19" height="16" viewBox="0 0 19 16"><path d="M3.700 5l5.500 3.500L3.700 12zM9.200 5l5.500 3.500L9.200 12z" fill="#000"/></svg>
<div class="btn" style="left:556px;top:819px;width:19px;height:17px;"></div>
<svg style="left:556px;top:819px" width="19" height="16" viewBox="0 0 19 16"><path d="M5 5l5.500 3.500L5 12zM11 5h2.200v7h-2.200z" fill="#000"/></svg>
<div style="left:575px;top:819px;width:147px;height:17px;background:#cdcdcd;"></div>
<svg style="left:722px;top:819px" width="17" height="17" viewBox="0 0 17 17"><path d="M5.300 7.200l3.200 3.500 3.200-3.500" stroke="#5c5c5c" stroke-width="2" fill="none"/></svg>
<div class="btn" style="left:760px;top:503px;width:65px;height:30px;"></div>
<span class="s" style="left:770.25px;top:510.60px;font-size:13.3px;line-height:16px;letter-spacing:-0.343px;color:#000;text-decoration:none;"><u>R</u>efresh</span>
<div style="left:760px;top:547px;width:67px;height:56.5px;background:#fff;"></div>
<span class="s" style="left:766.55px;top:548.80px;font-size:13.3px;line-height:16px;letter-spacing:-0.311px;color:#ff0000;">IDE Must</span>
<span class="s" style="left:764.25px;top:565.50px;font-size:13.3px;line-height:16px;letter-spacing:-0.172px;color:#ff0000;">be Closed</span>
<span class="s" style="left:769.80px;top:582.20px;font-size:13.3px;line-height:16px;letter-spacing:0.205px;color:#ff0000;">to Write</span>
<div class="btn" style="left:760px;top:611px;width:65px;height:60px;"></div>
<svg style="left:784px;top:623px" width="16" height="16" viewBox="0 0 16 16"><path d="M0.500 0.500H13.300L15.500 2.700V15.500H0.500z" fill="#8286e8" stroke="#6266c8" stroke-width="1"/><rect x="4.500" y="0.500" width="8" height="5.300" fill="#cfd2f8"/><rect x="8.500" y="1" width="2.200" height="4" fill="#4a50b4"/><rect x="2.700" y="8" width="10.600" height="7.500" fill="#f6f6fa"/><path d="M3.700 10h8.600M3.700 12h8.600M3.700 14h8.600" stroke="#a4a6bc" stroke-width="0.900"/></svg>
<span class="s" style="left:777.40px;top:650.20px;font-size:13.3px;line-height:16px;letter-spacing:-0.195px;">Write</span>
<div class="chk" style="left:760px;top:684px;width:13px;height:13px;"></div>
<span class="s" style="left:778.40px;top:682.20px;font-size:12.5px;line-height:16px;letter-spacing:-0.430px;">Write Xml</span>
<div class="chk" style="left:760px;top:705px;width:13px;height:13px;"></div>
<span class="s" style="left:778.80px;top:703.20px;font-size:12.5px;line-height:16px;letter-spacing:-0.872px;">.TestFavor</span>
<span class="s" style="left:760.00px;top:767.50px;font-size:13.3px;line-height:16px;letter-spacing:-0.338px;">Delete Key</span>
<span class="s" style="left:760.00px;top:784.50px;font-size:13.3px;line-height:16px;letter-spacing:-0.070px;">for lines</span>
<span class="s" style="left:760.00px;top:801.50px;font-size:13.3px;line-height:16px;letter-spacing:-0.238px;">unwnated</span>
<div style="left:0px;top:837px;width:875px;height:21px;background:#fff;"></div>
<div class="clip" style="left:875px;top:384px;width:316px;height:4px;">
<span class="m" style="left:-2px;top:-8px;font-size:12px;letter-spacing:-0.2px;color:#111;">DOS:UserString{PROP:Text}</span>
<span class="m" style="left:201px;top:-8px;font-size:12px;letter-spacing:-0.2px;color:#8c8c8c;">'Closing Report Co</span>
</div>
<div style="left:875px;top:388px;width:316px;height:465px;background:#f0f0f0;"></div>
<div style="left:875px;top:388px;width:316px;height:26px;background:#0063b1;"></div>
<span class="s" style="left:878.50px;top:392.50px;font-size:12px;line-height:16px;letter-spacing:-0.426px;color:#fff;">Search and Replace</span>
<div style="left:875px;top:414px;width:316px;height:24.5px;background:#f8f8fc;"></div>
<div style="left:875px;top:415px;width:50px;height:22px;background:#f6faff;border:1px solid #4a9ef0;"></div>
<svg style="left:877px;top:416px" width="18" height="19" viewBox="0 0 18 19"><path d="M1.800 16.600l5.400-5.600" stroke="#c98a3c" stroke-width="2" stroke-linecap="round"/><path d="M1.400 16.200l5.400-5.600" stroke="#f0b060" stroke-width="0.800" stroke-linecap="round"/><circle cx="10.400" cy="7.900" r="4.600" fill="#d6ecfc" stroke="#9aa8b8" stroke-width="1.200"/><path d="M7.600 6.800a3 3 0 0 1 3-2" stroke="#fff" stroke-width="1.200" fill="none" stroke-linecap="round"/></svg>
<span class="s" style="left:896.00px;top:417.50px;font-size:12px;line-height:16px;letter-spacing:-0.281px;">Find</span>
<svg style="left:926px;top:416px" width="18" height="19" viewBox="0 0 18 19"><text x="0.300" y="13.500" font-family="Liberation Serif, serif" font-size="14" font-weight="bold" fill="#e8602c">a</text><text x="7.600" y="9.300" font-family="Liberation Sans, sans-serif" font-size="8.500" font-weight="bold" fill="#2f6fd0">Я</text><path d="M9.500 11.500h5.500M12.200 11.500v4.500M10 14.200l2.200 2.600 2.200-2.600" stroke="#34a848" stroke-width="1.100" fill="none"/></svg>
<span class="s" style="left:946.50px;top:417.50px;font-size:12px;line-height:16px;letter-spacing:-0.671px;">Replace</span>
<span class="s" style="left:886.00px;top:460.00px;font-size:12px;line-height:16px;letter-spacing:-0.151px;">Find what:</span>
<div style="left:883px;top:478px;width:320px;height:22px;background:#fff;border:1px solid #0078d7;"></div>
<div style="left:886px;top:481px;width:49px;height:14px;background:#0078d7;"></div>
<div style="left:935px;top:481px;width:1px;height:14px;background:#ff8a2a;"></div>
<span class="m" style="left:886px;top:480.5px;font-size:12px;letter-spacing:-0.200px;color:#fff;">CBDATA=</span>
<div style="left:883px;top:500px;width:320px;height:352px;background:#fff;border:1px solid #7a7a7a;"></div>
<div style="left:884px;top:501px;width:320px;height:14px;background:#0078d7;"></div>
<span class="m" style="left:886px;top:500.5px;font-size:12px;letter-spacing:-0.200px;color:#fff;">CBDATA=</span>
<span class="m" style="left:886px;top:514.5px;font-size:12px;letter-spacing:-0.200px;">EMP. T</span>
<span class="m" style="left:886px;top:528.5px;font-size:12px;letter-spacing:-0.200px;">EMPLOYEE CALENDAR YEAR GROSS PAY BY FUND (UC40</span>
<span class="m" style="left:886px;top:542.5px;font-size:12px;letter-spacing:-0.200px;">GROSS PAY BY F</span>
<span class="m" style="left:886px;top:556.5px;font-size:12px;letter-spacing:-0.200px;">Level1BreakHdrPrt</span>
<span class="m" style="left:886px;top:570.5px;font-size:12px;letter-spacing:-0.200px;">Level2BreakHdrPrt</span>
<span class="m" style="left:886px;top:584.5px;font-size:12px;letter-spacing:-0.200px;">MST:UC40Exempt</span>
<span class="m" style="left:886px;top:598.5px;font-size:12px;letter-spacing:-0.200px;">NO. EMPS</span>
<span class="m" style="left:886px;top:612.5px;font-size:12px;letter-spacing:-0.200px;">PLOYEE CALENDAR YEAR GROSS</span>
<span class="m" style="left:886px;top:626.5px;font-size:12px;letter-spacing:-0.200px;">zzzzzzz</span>
<span class="m" style="left:886px;top:640.5px;font-size:12px;letter-spacing:-0.200px;">========= Favorites =========</span>
<span class="m" style="left:886px;top:654.5px;font-size:12px;letter-spacing:-0.200px;">ButtonInsert RO</span>
<span class="m" style="left:886px;top:668.5px;font-size:12px;letter-spacing:-0.200px;">CallUpdate RO</span>
<span class="m" style="left:886px;top:682.5px;font-size:12px;letter-spacing:-0.200px;">CheckOpen(</span>
<span class="m" style="left:886px;top:696.5px;font-size:12px;letter-spacing:-0.200px;">Close(</span>
<span class="m" style="left:886px;top:710.5px;font-size:12px;letter-spacing:-0.200px;">ClosingWindow</span>
<span class="m" style="left:886px;top:724.5px;font-size:12px;letter-spacing:-0.200px;">EVENT:OpenWindow</span>
<span class="m" style="left:886px;top:738.5px;font-size:12px;letter-spacing:-0.200px;">FillQueue R</span>
<span class="m" style="left:886px;top:752.5px;font-size:12px;letter-spacing:-0.200px;">GetNextRecord RO</span>
<span class="m" style="left:886px;top:766.5px;font-size:12px;letter-spacing:-0.200px;">OF ?OK</span>
<span class="m" style="left:886px;top:780.5px;font-size:12px;letter-spacing:-0.200px;">PrepareProcedure</span>
<span class="m" style="left:886px;top:794.5px;font-size:12px;letter-spacing:-0.200px;">PrimeFields RO</span>
<span class="m" style="left:886px;top:808.5px;font-size:12px;letter-spacing:-0.200px;">ProcedureReturn RO</span>
<span class="m" style="left:886px;top:822.5px;font-size:12px;letter-spacing:-0.200px;">RefreshWindow RO</span>
<span class="m" style="left:886px;top:836.5px;font-size:12px;letter-spacing:-0.200px;">ValidateRecord</span>
<svg style="left:0;top:0" width="1191" height="858" viewBox="0 0 1191 858"><path d="M385.5 116.4C383.7 116.5 378.5 116.7 374.5 117.0C370.5 117.3 366.1 117.8 361.5 118.3C356.9 118.8 351.0 119.4 346.6 120.1C342.2 120.8 338.5 121.8 335.4 122.7C332.3 123.6 329.6 124.4 328.0 125.6C326.4 126.8 326.0 127.9 326.0 129.8C326.0 131.8 327.4 133.6 328.0 137.3C328.6 141.0 329.0 146.6 329.8 152.2C330.6 157.8 331.8 164.6 332.6 170.8C333.4 177.0 333.9 183.5 334.5 189.4C335.1 195.3 335.8 200.6 336.3 206.2C336.8 211.8 337.1 217.1 337.3 223.0C337.5 228.9 337.4 236.3 337.3 241.6C337.2 246.9 337.6 250.6 337.0 255.0C336.4 259.4 334.8 262.7 334.0 268.0C333.2 273.3 332.7 280.4 332.5 286.6C332.3 292.8 333.6 298.8 333.0 305.0C332.4 311.2 330.3 317.2 328.8 323.8C327.3 330.4 325.1 338.4 324.0 344.3C322.9 350.2 322.0 355.6 322.2 359.2C322.4 362.8 323.0 364.4 325.0 365.8C327.0 367.2 330.1 367.5 334.3 367.6C338.5 367.8 344.1 367.0 350.0 366.7C355.9 366.4 363.5 366.0 369.5 366.0C375.5 366.0 383.2 366.4 386.0 366.5" stroke="#1fe40c" stroke-width="3" fill="none" stroke-linecap="round" stroke-linejoin="round"/><path d="M333.5 267.0C331.1 267.3 324.2 268.2 319.4 268.9C314.6 269.6 308.9 269.9 304.5 271.3C300.1 272.7 296.4 274.5 293.3 277.3C290.2 280.1 289.0 284.4 285.9 288.4C282.8 292.4 277.8 297.1 274.7 301.5C271.6 305.9 268.8 310.8 267.3 314.5C265.8 318.2 265.5 320.4 265.8 323.8C266.1 327.2 267.3 330.3 269.1 335.0C270.9 339.7 274.1 346.2 276.6 351.8C279.1 357.4 281.2 363.9 284.0 368.6C286.8 373.3 290.0 376.4 293.4 379.8C296.8 383.2 300.4 386.0 304.5 389.0C308.6 392.0 313.3 392.5 318.0 398.0C322.7 403.5 326.6 413.3 332.5 422.0C338.4 430.7 346.5 440.1 353.5 450.0C360.5 459.9 368.4 471.8 374.5 481.5C380.6 491.2 385.8 498.9 390.0 508.0C394.2 517.1 395.5 526.4 399.8 535.9C404.1 545.4 412.2 556.5 416.0 565.2C419.8 573.9 420.4 582.0 422.6 588.0C424.9 594.0 427.3 596.9 429.5 601.0C431.7 605.1 434.4 608.7 435.6 612.5C436.8 616.3 436.9 619.4 436.5 624.0C436.1 628.6 434.1 635.9 433.2 640.0C432.2 644.1 431.7 644.9 430.8 648.7C429.9 652.5 428.1 658.5 428.0 662.7C427.9 666.9 429.5 670.7 430.2 673.9C430.9 677.1 432.1 677.3 432.0 682.0C431.9 686.7 430.8 694.9 429.4 701.9C428.0 708.9 424.7 718.2 423.8 724.3C422.9 730.4 423.3 733.6 423.8 738.3C424.3 742.9 426.1 746.6 426.6 752.2C427.1 757.8 427.0 765.3 427.0 771.8C427.0 778.3 427.1 786.7 426.6 791.4C426.1 796.1 423.6 797.6 423.8 799.8C424.0 802.0 424.5 803.8 428.0 804.8C431.5 805.8 438.6 805.7 444.8 806.0C451.0 806.3 461.6 806.7 465.0 806.8" stroke="#1fe40c" stroke-width="3" fill="none" stroke-linecap="round" stroke-linejoin="round"/><path d="M431.5 677.5C432.2 677.2 433.8 675.7 436.0 675.8C438.2 675.9 440.3 677.4 444.8 678.0C449.3 678.6 460.0 679.2 463.0 679.5" stroke="#1fe40c" stroke-width="3" fill="none" stroke-linecap="round" stroke-linejoin="round"/><path d="M276.6 500.6C279.2 501.4 285.7 503.9 292.0 505.4C298.3 506.9 306.9 508.4 314.3 509.6C321.8 510.9 329.7 511.6 336.7 512.9C343.7 514.2 353.7 514.2 356.3 517.4C358.9 520.6 353.5 525.9 352.1 532.0C350.7 538.1 348.6 545.9 347.9 554.3C347.2 562.7 347.4 573.4 347.9 582.3C348.4 591.2 350.1 601.7 350.7 607.5C351.3 613.3 351.1 612.2 351.3 617.3C351.5 622.4 351.0 630.6 352.1 638.3C353.2 646.0 355.8 654.5 357.7 663.4C359.6 672.2 361.9 683.0 363.3 691.4C364.7 699.8 365.5 709.0 366.1 713.8C366.7 718.6 368.5 718.9 366.9 720.0C365.3 721.1 361.8 720.8 356.3 720.3C350.8 719.8 341.4 717.6 333.9 717.1C326.4 716.6 318.0 716.7 311.5 717.1C305.0 717.5 300.1 718.8 294.8 719.4C289.6 720.0 284.8 720.3 280.0 720.5C275.2 720.7 268.3 720.5 266.0 720.5" stroke="#0c40e0" stroke-width="3" fill="none" stroke-linecap="round" stroke-linejoin="round"/><path d="M351.3 617.3C354.0 616.5 361.1 614.6 367.5 612.5C373.9 610.4 384.5 606.4 389.9 604.7C395.3 603.1 394.6 604.1 400.0 602.6C405.4 601.1 415.4 597.5 422.4 595.6C429.4 593.7 435.7 592.4 442.0 591.4C448.3 590.4 455.8 590.4 460.0 589.5C464.2 588.6 465.8 586.6 467.0 586.0" stroke="#0c40e0" stroke-width="3" fill="none" stroke-linecap="round" stroke-linejoin="round"/><path d="M510.0 504.4C506.0 504.5 493.0 504.6 486.0 505.0C479.0 505.4 471.4 504.5 468.0 507.0C464.6 509.5 466.1 515.7 465.5 520.0C464.9 524.3 464.9 526.3 464.6 532.8C464.3 539.3 463.5 549.5 463.5 559.0C463.5 568.5 464.6 582.0 464.5 590.0C464.4 598.0 464.0 601.2 463.0 606.8C462.0 612.4 459.6 617.6 458.7 623.6C457.8 629.6 457.1 637.4 457.3 643.0C457.5 648.6 460.0 652.3 460.0 657.0C460.0 661.7 456.1 668.9 457.3 671.0C458.5 673.1 462.6 670.6 467.0 669.7C471.4 668.8 481.2 666.2 484.0 665.5" stroke="#0c40e0" stroke-width="3" fill="none" stroke-linecap="round" stroke-linejoin="round"/><path d="M687.8 503.9C692.8 504.5 709.2 506.9 717.6 507.8C726.0 508.7 732.5 508.9 738.0 509.3C743.5 509.7 748.1 506.9 750.3 510.3C752.5 513.7 751.1 519.8 751.3 529.6C751.5 539.4 750.6 556.1 751.3 569.3C751.9 582.5 754.4 597.0 755.2 608.9C756.1 620.8 756.6 631.4 756.4 640.6C756.2 649.9 755.5 655.1 754.0 664.4C752.5 673.6 749.0 685.3 747.3 696.1C745.6 706.9 745.1 721.3 743.7 729.3C742.3 737.3 740.8 739.1 739.1 744.0C737.4 748.9 735.0 753.3 733.4 758.7C731.8 764.1 729.9 771.2 729.3 776.6C728.7 782.0 730.2 786.9 729.7 791.3C729.2 795.6 727.5 799.4 726.1 802.7C724.7 806.0 723.0 809.3 721.2 810.9C719.4 812.5 718.0 812.4 715.5 812.5C713.0 812.6 709.1 812.2 706.5 811.7C703.9 811.2 703.8 810.0 700.0 809.2C696.2 808.4 686.7 807.4 684.0 807.0" stroke="#ff78fd" stroke-width="3.2" fill="none" stroke-linecap="round" stroke-linejoin="round"/><path d="M743.0 647.0C750.6 646.4 773.3 643.9 788.9 643.2C804.5 642.5 821.8 643.0 836.5 642.6C851.2 642.2 870.2 641.1 877.0 640.8" stroke="#ff78fd" stroke-width="3.2" fill="none" stroke-linecap="round" stroke-linejoin="round"/><path d="M850.3 626.7C851.6 626.9 855.3 626.8 858.3 627.9C861.3 629.0 865.1 631.4 868.2 633.5C871.3 635.6 877.7 638.6 877.0 640.8C876.3 643.0 868.0 644.3 864.2 646.6C860.4 648.9 857.1 651.0 854.3 654.5C851.5 658.0 848.7 665.4 847.6 667.6" stroke="#ff78fd" stroke-width="3.2" fill="none" stroke-linecap="round" stroke-linejoin="round"/></svg>
</body></html>
